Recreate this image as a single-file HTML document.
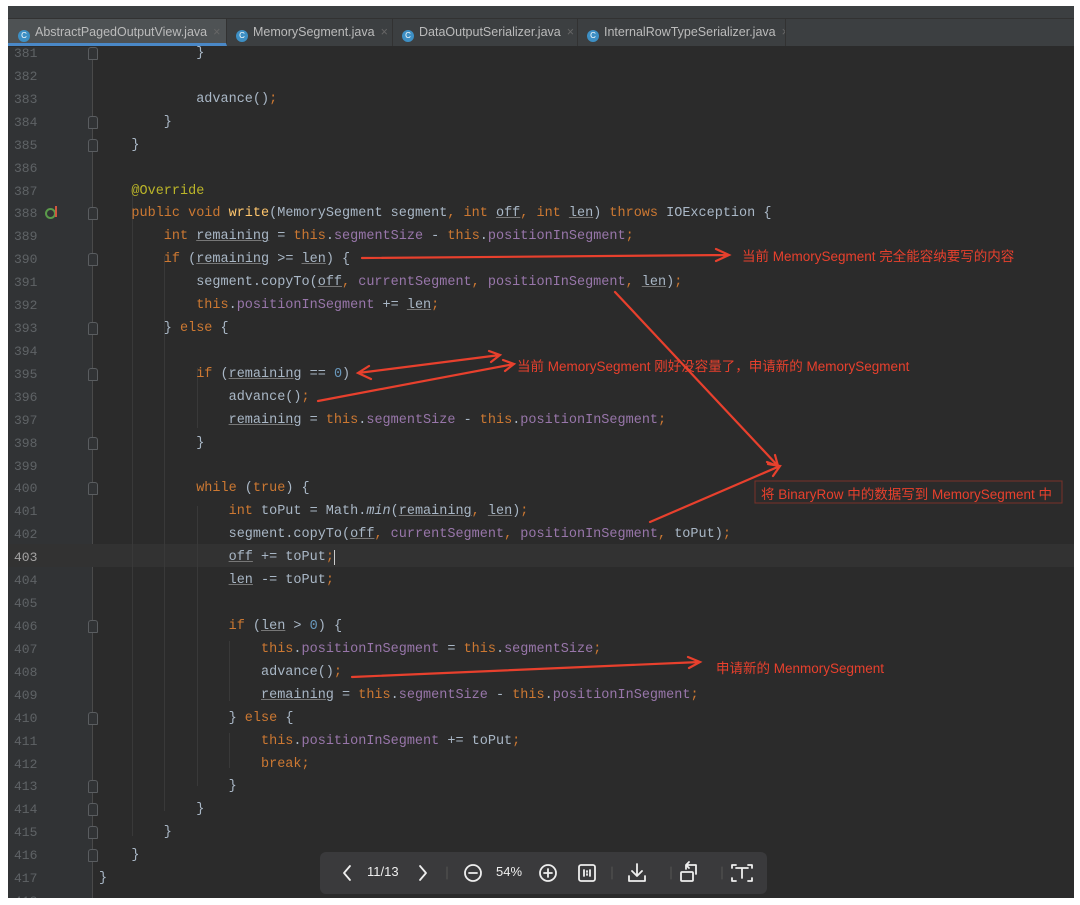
<!DOCTYPE html>
<html><head><meta charset="utf-8"><style>
body{margin:0;width:1080px;height:905px;background:#fff;position:relative;overflow:hidden;font-family:"Liberation Sans","Noto Sans CJK SC",sans-serif}
#ed{position:absolute;left:8px;top:6px;width:1066px;height:892px;background:#2b2b2b;overflow:hidden}
#tabs1{position:absolute;left:0;top:0;width:1066px;height:12px;background:#3c3f41;border-bottom:1px solid #323232}
#tabs2{position:absolute;left:0;top:13px;width:1066px;height:27px;background:#3c3f41;border-bottom:1px solid #2b2b2b}
.tab{position:absolute;top:0;height:27px;line-height:26px;font-size:12.5px;color:#bbb;border-right:1px solid #323232;white-space:nowrap;overflow:hidden}
.tab .ic{display:inline-block;width:12px;height:12px;border-radius:50%;background:#3d8fc4;vertical-align:-2px;margin:0 5px 0 10px;color:#fff;font-size:8px;line-height:12px;text-align:center}
.tab .x{color:#666;margin:0 0 0 6px}
#gut{position:absolute;left:0;top:41px;width:84px;height:860px;background:#313335}
#gl{position:absolute;left:84px;top:41px;width:1px;height:860px;background:#4a4a4a}
.ln{position:absolute;left:6px;width:26px;font-family:"Liberation Mono",monospace;font-size:13px;color:#5f6366;height:23px;line-height:23px}
.cl{position:absolute;left:91px;height:23px;line-height:23px;font-family:"Liberation Mono",monospace;font-size:13.5px;color:#a9b7c6;white-space:pre}
.k{color:#cc7832}.f{color:#9876aa}.n{color:#6897bb}.m{color:#ffc66d}.a{color:#bbb529}.u{text-decoration:underline;text-decoration-color:#777}
.fold{position:absolute;left:80px;width:8px;height:11px;border:1px solid #5a5d60;border-radius:3px 3px 1px 1px;background:#313335}
.g{position:absolute;width:1px;background:#393939}
.note{position:absolute;color:#e8402d;font-size:13.5px;white-space:nowrap}
#tb{position:absolute;left:320px;top:852px;width:447px;height:42px;background:#3a3a3c;border-radius:6px}
#tb span{position:absolute;color:#eee;font-size:13px;top:12px}
</style></head><body>
<div id="ed">
<div id="tabs1"></div>
<div id="tabs2">
<div class="tab" style="left:0;width:218px;background:#4e5254;border-bottom:3px solid #4a88c7;height:24px"><span class="ic">C</span>AbstractPagedOutputView.java<span class="x">×</span></div>
<div class="tab" style="left:218px;width:166px"><span class="ic">C</span>MemorySegment.java<span class="x">×</span></div>
<div class="tab" style="left:384px;width:185px"><span class="ic">C</span>DataOutputSerializer.java<span class="x">×</span></div>
<div class="tab" style="left:569px;width:208px"><span class="ic">C</span>InternalRowTypeSerializer.java<span class="x">×</span></div>
</div>
<div id="gut"></div><div id="gl"></div>
<div style="position:absolute;left:0;top:538px;width:1066px;height:23px;background:#323232"></div>
<div class="g" style="left:124px;top:180px;height:650px"></div>
<div class="g" style="left:156px;top:250px;height:555px"></div>
<div class="g" style="left:189px;top:362px;height:60px"></div>
<div class="g" style="left:189px;top:500px;height:280px"></div>
<div class="g" style="left:221px;top:635px;height:60px"></div>
<div class="g" style="left:221px;top:727px;height:35px"></div>
</div>
<div id="code" style="position:absolute;left:8px;top:6px;width:1066px;height:892px;overflow:hidden"></div>
<script>
var L=[
[381,3,'}'],[382,0,''],[383,3,'advance()<span class="k">;</span>'],[384,2,'}'],[385,1,'}'],[386,0,''],
[387,1,'<span class="a">@Override</span>'],
[388,1,'<span class="k">public void </span><span class="m">write</span>(MemorySegment segment<span class="k">, int </span><span class="u">off</span><span class="k">, int </span><span class="u">len</span>) <span class="k">throws </span>IOException {'],
[389,2,'<span class="k">int </span><span class="u">remaining</span> = <span class="k">this</span>.<span class="f">segmentSize</span> - <span class="k">this</span>.<span class="f">positionInSegment</span><span class="k">;</span>'],
[390,2,'<span class="k">if </span>(<span class="u">remaining</span> >= <span class="u">len</span>) {'],
[391,3,'segment.copyTo(<span class="u">off</span><span class="k">, </span><span class="f">currentSegment</span><span class="k">, </span><span class="f">positionInSegment</span><span class="k">, </span><span class="u">len</span>)<span class="k">;</span>'],
[392,3,'<span class="k">this</span>.<span class="f">positionInSegment</span> += <span class="u">len</span><span class="k">;</span>'],
[393,2,'} <span class="k">else </span>{'],[394,0,''],
[395,3,'<span class="k">if </span>(<span class="u">remaining</span> == <span class="n">0</span>)'],
[396,4,'advance()<span class="k">;</span>'],
[397,4,'<span class="u">remaining</span> = <span class="k">this</span>.<span class="f">segmentSize</span> - <span class="k">this</span>.<span class="f">positionInSegment</span><span class="k">;</span>'],
[398,3,'}'],[399,0,''],
[400,3,'<span class="k">while </span>(<span class="k">true</span>) {'],
[401,4,'<span class="k">int </span>toPut = Math.<i>min</i>(<span class="u">remaining</span><span class="k">, </span><span class="u">len</span>)<span class="k">;</span>'],
[402,4,'segment.copyTo(<span class="u">off</span><span class="k">, </span><span class="f">currentSegment</span><span class="k">, </span><span class="f">positionInSegment</span><span class="k">, </span>toPut)<span class="k">;</span>'],
[403,4,'<span class="u">off</span> += toPut<span class="k">;</span><span style="border-left:1px solid #ccc"></span>'],
[404,4,'<span class="u">len</span> -= toPut<span class="k">;</span>'],[405,0,''],
[406,4,'<span class="k">if </span>(<span class="u">len</span> > <span class="n">0</span>) {'],
[407,5,'<span class="k">this</span>.<span class="f">positionInSegment</span> = <span class="k">this</span>.<span class="f">segmentSize</span><span class="k">;</span>'],
[408,5,'advance()<span class="k">;</span>'],
[409,5,'<span class="u">remaining</span> = <span class="k">this</span>.<span class="f">segmentSize</span> - <span class="k">this</span>.<span class="f">positionInSegment</span><span class="k">;</span>'],
[410,4,'} <span class="k">else </span>{'],
[411,5,'<span class="k">this</span>.<span class="f">positionInSegment</span> += toPut<span class="k">;</span>'],
[412,5,'<span class="k">break;</span>'],
[413,4,'}'],[414,3,'}'],[415,2,'}'],[416,1,'}'],[417,0,'}'],[418,0,'']];
var folds=[381,384,385,388,390,393,395,398,400,406,410,413,414,415,416];
var h='';
L.forEach(function(r,i){var t=36+22.92*i;
h+='<div class="ln" style="top:'+t+'px;'+(r[0]==403?'color:#a4a3a3':'')+'">'+r[0]+'</div>';
h+='<div class="cl" style="top:'+t+'px;left:'+(91+32.4*r[1])+'px">'+r[2]+'</div>';
if(folds.indexOf(r[0])>=0)h+='<div class="fold" style="top:'+(t+5)+'px"></div>';
});
h+='<div style="position:absolute;left:37px;top:202px;width:7px;height:7px;border-radius:50%;border:2px solid #5a9a4a"></div><div style="position:absolute;left:47px;top:200px;width:2px;height:11px;background:#d0573f"></div>';
document.getElementById('code').innerHTML=h;
</script>
<svg style="position:absolute;left:0;top:0" width="1080" height="905" fill="none" stroke="#e8402d" stroke-width="2.2" stroke-linecap="round">
<path d="M362 258L728 255M716 249L729 255L716 261"/>
<path d="M358 373L500 355M369 366L358 373L371 379M489 351L500 355L491 362"/>
<path d="M318 401L514 364M503 360L514 364L505 371"/>
<path d="M615 292L778 466M767 462L778 466L775 455"/>
<path d="M650 522L780 466M768 464L780 466L773 476"/>
<path d="M352 677L700 662M688 657L700 662L689 668"/>
<rect x="755" y="481" width="307" height="22" stroke="#7a3228" stroke-width="1"/>
</svg>
<div class="note" style="left:742px;top:245px">当前 MemorySegment 完全能容纳要写的内容</div>
<div class="note" style="left:517px;top:355px">当前 MemorySegment 刚好没容量了，申请新的 MemorySegment</div>
<div class="note" style="left:761px;top:483px">将 BinaryRow 中的数据写到 MemorySegment 中</div>
<div class="note" style="left:716px;top:657px">申请新的 MenmorySegment</div>
<div id="tb">
<svg width="447" height="42" fill="none" stroke="#eee" stroke-width="1.8" stroke-linecap="round" stroke-linejoin="round">
<path d="M30 14L24 21L30 28"/><path d="M100 14L106 21L100 28"/>
<path d="M127 15V27" stroke="#555" stroke-width="1"/>
<circle cx="153" cy="21" r="8"/><path d="M149 21H157"/>
<circle cx="228" cy="21" r="8"/><path d="M224 21H232M228 17V25"/>
<rect x="259" y="13" width="16" height="16" rx="2"/><path d="M264 18V24M270 18V24M267 19V20M267 22V23"/>
<path d="M292 15V27M351 15V27M402 15V27" stroke="#555" stroke-width="1"/>
<path d="M317 12V24M312 19L317 24L322 19M309 24V29H325V24"/>
<rect x="361" y="20" width="12" height="9" rx="1"/><path d="M366 17V13H376V22M366 13L369 10M366 13L369 16"/>
<path d="M412 16V13H416M428 13H432V16M432 26V29H428M416 29H412V26M416 16H428M422 16V26"/>
</svg>
<span style="left:47px">11/13</span><span style="left:176px">54%</span>
</div>
</body></html>
